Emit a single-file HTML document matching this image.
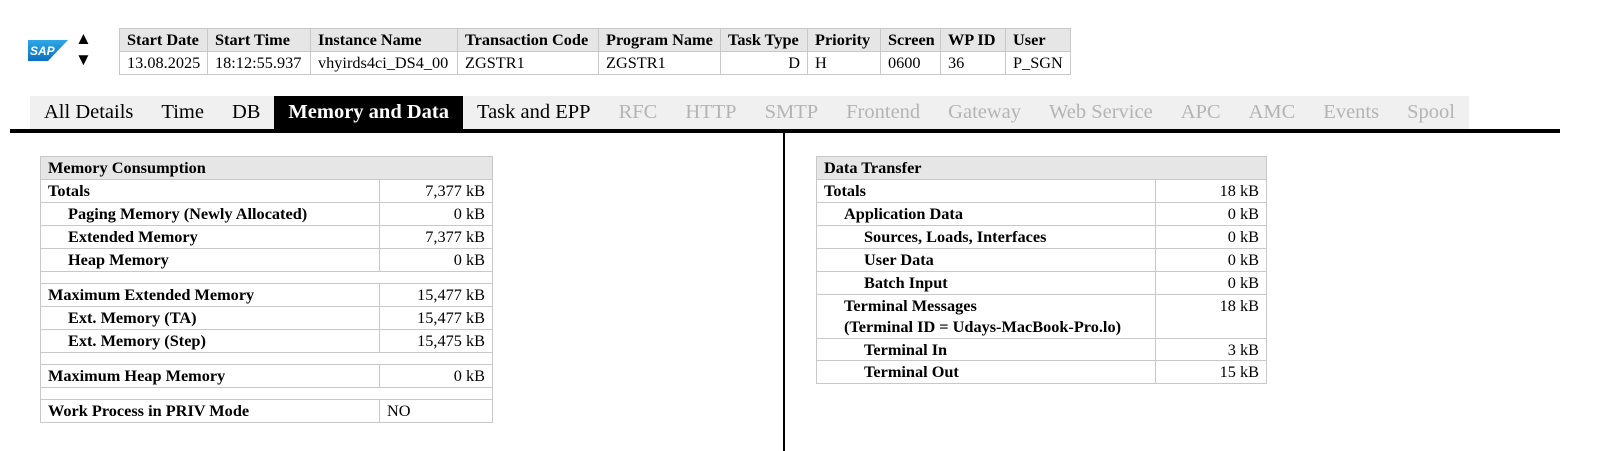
<!DOCTYPE html>
<html><head><meta charset="utf-8">
<style>
*{margin:0;padding:0;box-sizing:border-box}
body{width:1599px;height:451px;background:#fff;font-family:"Liberation Serif",serif;font-size:16.3px;color:#000;position:relative;overflow:hidden}
.abs{position:absolute}
table{border-collapse:collapse;position:absolute;table-layout:fixed}
td{border:1px solid #c8c8c8;padding:0 7px;white-space:nowrap;line-height:21px;vertical-align:top;overflow:hidden}
.hd td{background:#e6e6e6;font-weight:bold}
.r{text-align:right}
.b{font-weight:bold}
.i1{padding-left:27px}
.i2{padding-left:47px}
.tabs{position:absolute;left:30px;top:96px;height:33px;display:flex;background:#f0f0f0;font-size:20.5px}
.tabs div{padding:0 14px;line-height:33px;color:#000}
.tabs .g{color:#b4b4b4}
.tabs .on{background:#000;color:#fff;font-weight:bold}
.sp td{height:12px;line-height:10px}
</style></head><body>
<svg class="abs" style="left:28px;top:40px" width="40" height="21" viewBox="0 0 40 21">
<defs><linearGradient id="g" x1="0" y1="0" x2="0" y2="1"><stop offset="0" stop-color="#2fa7e6"/><stop offset="1" stop-color="#0a6fc0"/></linearGradient></defs>
<path d="M0 0H40L20 21H0Z" fill="url(#g)"/>
<text x="2" y="15" font-family="Liberation Sans" font-weight="bold" font-size="12" fill="#fff" font-style="italic">SAP</text>
</svg>
<div class="abs" style="left:75px;top:29px;font-size:17px">&#9650;</div>
<div class="abs" style="left:75px;top:50px;font-size:17px">&#9660;</div>

<table style="left:119px;top:28px;width:952px">
<colgroup><col style="width:88px"><col style="width:103px"><col style="width:147px"><col style="width:141px"><col style="width:122px"><col style="width:87px"><col style="width:73px"><col style="width:60px"><col style="width:65px"><col></colgroup>
<tr class="hd" style="height:23px"><td>Start Date</td><td>Start Time</td><td>Instance Name</td><td>Transaction Code</td><td>Program Name</td><td>Task Type</td><td>Priority</td><td>Screen</td><td>WP ID</td><td>User</td></tr>
<tr style="height:23px"><td>13.08.2025</td><td>18:12:55.937</td><td>vhyirds4ci_DS4_00</td><td>ZGSTR1</td><td>ZGSTR1</td><td class="r">D</td><td>H</td><td>0600</td><td>36</td><td>P_SGN</td></tr>
</table>

<div class="tabs">
<div>All Details</div><div>Time</div><div>DB</div><div class="on">Memory and Data</div><div>Task and EPP</div><div class="g">RFC</div><div class="g">HTTP</div><div class="g">SMTP</div><div class="g">Frontend</div><div class="g">Gateway</div><div class="g">Web Service</div><div class="g">APC</div><div class="g">AMC</div><div class="g">Events</div><div class="g">Spool</div>
</div>
<div class="abs" style="left:10px;top:129px;width:1550px;height:4px;background:#000"></div>
<div class="abs" style="left:783px;top:133px;width:2px;height:318px;background:#000"></div>

<table style="left:40px;top:156px;width:453px">
<colgroup><col style="width:339px"><col></colgroup>
<tr class="hd" style="height:23px"><td colspan="2">Memory Consumption</td></tr>
<tr style="height:23px"><td class="b">Totals</td><td class="r">7,377 kB</td></tr>
<tr style="height:23px"><td class="b i1">Paging Memory (Newly Allocated)</td><td class="r">0 kB</td></tr>
<tr style="height:23px"><td class="b i1">Extended Memory</td><td class="r">7,377 kB</td></tr>
<tr style="height:23px"><td class="b i1">Heap Memory</td><td class="r">0 kB</td></tr>
<tr class="sp"><td colspan="2"></td></tr>
<tr style="height:23px"><td class="b">Maximum Extended Memory</td><td class="r">15,477 kB</td></tr>
<tr style="height:23px"><td class="b i1">Ext. Memory (TA)</td><td class="r">15,477 kB</td></tr>
<tr style="height:23px"><td class="b i1">Ext. Memory (Step)</td><td class="r">15,475 kB</td></tr>
<tr class="sp"><td colspan="2"></td></tr>
<tr style="height:23px"><td class="b">Maximum Heap Memory</td><td class="r">0 kB</td></tr>
<tr class="sp"><td colspan="2"></td></tr>
<tr style="height:23px"><td class="b">Work Process in PRIV Mode</td><td>NO</td></tr>
</table>

<table style="left:816px;top:156px;width:451px">
<colgroup><col style="width:339px"><col></colgroup>
<tr class="hd" style="height:23px"><td colspan="2">Data Transfer</td></tr>
<tr style="height:23px"><td class="b">Totals</td><td class="r">18 kB</td></tr>
<tr style="height:23px"><td class="b i1">Application Data</td><td class="r">0 kB</td></tr>
<tr style="height:23px"><td class="b i2">Sources, Loads, Interfaces</td><td class="r">0 kB</td></tr>
<tr style="height:23px"><td class="b i2">User Data</td><td class="r">0 kB</td></tr>
<tr style="height:23px"><td class="b i2">Batch Input</td><td class="r">0 kB</td></tr>
<tr style="height:44px"><td class="b i1">Terminal Messages<br>(Terminal ID = Udays-MacBook-Pro.lo)</td><td class="r">18 kB</td></tr>
<tr style="height:22px"><td class="b i2">Terminal In</td><td class="r">3 kB</td></tr>
<tr style="height:23px"><td class="b i2">Terminal Out</td><td class="r">15 kB</td></tr>
</table>
</body></html>
